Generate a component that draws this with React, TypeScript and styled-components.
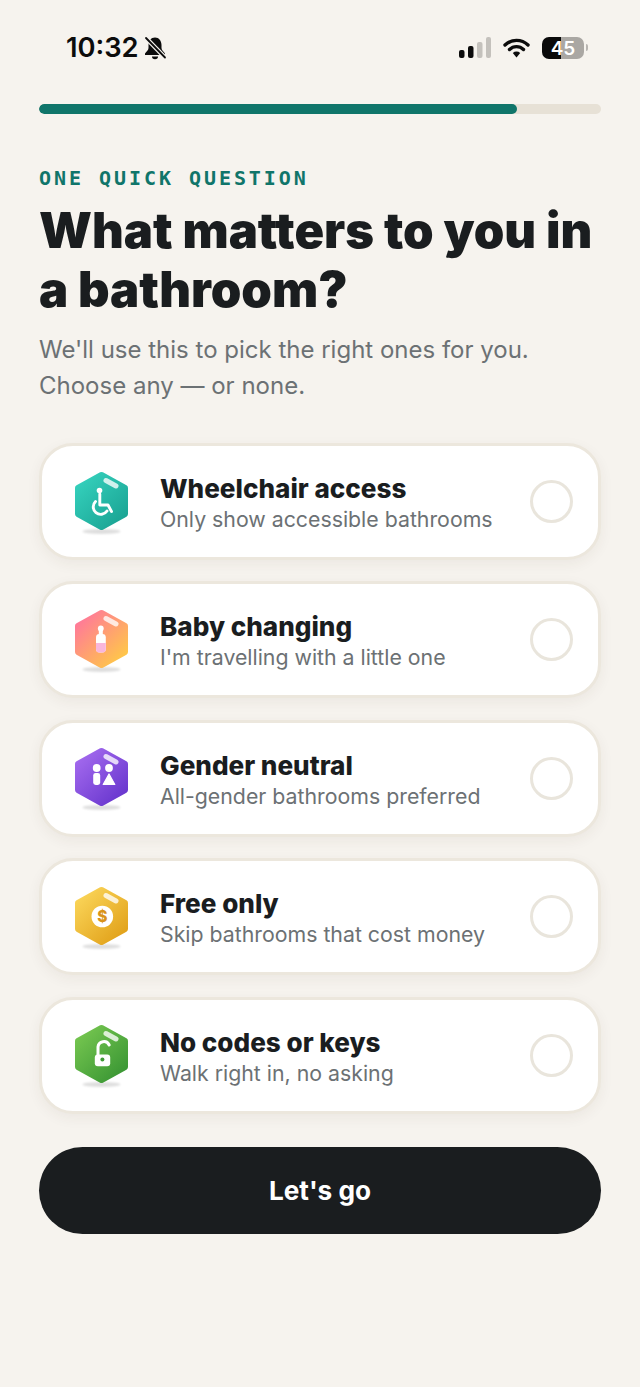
import React from "react";
import styled, { createGlobalStyle } from "styled-components";

const Global = createGlobalStyle`
  html, body { margin: 0; padding: 0; background: #f6f3ee; }
  * { box-sizing: border-box; }
`;

const Page = styled.main`
  width: 640px;
  height: 1387px;
  overflow: hidden;
  background: #f6f3ee;
  font-family: Inter, "Liberation Sans", sans-serif;
  color: #1a1d1f;
`;

const StatusBar = styled.header`
  display: flex;
  align-items: center;
  justify-content: space-between;
  height: 22px;
  margin-top: 37px;
  padding: 0 56px 0 66px;
`;

const StatusLeft = styled.div`
  display: flex;
  align-items: center;
  gap: 4px;
`;

const Time = styled.span`
  font-size: 27.3px;
  font-weight: 600;
  line-height: 22px;
  color: #0c0c0c;
`;

const StatusRight = styled.div`
  display: flex;
  align-items: center;
  gap: 12px;
`;

const Battery = styled.div`
  position: relative;
  display: flex;
  align-items: center;
  justify-content: center;
  width: 42px;
  height: 22px;
  border-radius: 7px;
  background: linear-gradient(to right, #0a0a0a 0 46%, #aaa7a3 46% 100%);
  color: #fff;
  font-size: 19px;
  font-weight: 600;
  &::after {
    content: "";
    position: absolute;
    right: -4px;
    top: 7px;
    width: 2px;
    height: 7px;
    border-radius: 0 2px 2px 0;
    background: #b8b5b1;
  }
`;

const Content = styled.div`
  padding: 0 39px;
`;

const Track = styled.div`
  height: 10px;
  width: 562px;
  margin-top: 45px;
  border-radius: 5px;
  background: #e7e1d6;
  overflow: hidden;
`;

const Fill = styled.div`
  height: 100%;
  border-radius: 5px;
  background: #10756a;
`;

const Eyebrow = styled.p`
  margin: 52px 0 0;
  font-family: "DejaVu Sans Mono", "Liberation Mono", monospace;
  font-size: 20px;
  font-weight: 700;
  line-height: 24px;
  letter-spacing: 2.95px;
  color: #10756a;
`;

const Title = styled.h1`
  margin: 11px 0 0;
  font-size: 49px;
  font-weight: 900;
  font-variation-settings: "opsz" 28;
  line-height: 59px;
  color: #1a1d1f;
`;

const Subtitle = styled.p`
  margin: 13px 0 0;
  font-size: 24px;
  font-weight: 400;
  font-variation-settings: "opsz" 15;
  line-height: 36px;
  color: #6c7174;
`;

const Options = styled.div`
  display: flex;
  flex-direction: column;
  gap: 21.4px;
  margin-top: 39px;
  width: 562px;
`;

const Card = styled.div`
  display: flex;
  align-items: center;
  height: 117px;
  padding: 0 25px 0 30px;
  border: 3px solid #ece7dd;
  border-radius: 34px;
  background: #fff;
  box-shadow: 0 4px 14px rgba(60, 50, 30, 0.06);
`;

const IconSlot = styled.svg`
  flex: none;
  width: 60px;
  height: 72px;
  margin-right: 28px;
`;

const CardText = styled.div`
  flex: 1;
  min-width: 0;
  padding-top: 4px;
`;

const CardTitle = styled.div`
  font-size: 26.1px;
  font-weight: 800;
  font-variation-settings: "opsz" 16;
  line-height: 32px;
  color: #1a1d1f;
`;

const CardSub = styled.div`
  font-size: 21.3px;
  font-weight: 400;
  font-variation-settings: "opsz" 14;
  line-height: 29px;
  color: #6c7174;
`;

const Radio = styled.div`
  flex: none;
  width: 43px;
  height: 43px;
  border-radius: 50%;
  border: 3px solid #e9e5dc;
  background: #fff;
`;

const Cta = styled.button`
  display: block;
  width: 562px;
  height: 87px;
  margin-top: 33.4px;
  border: 0;
  border-radius: 44px;
  background: #1a1d1f;
  color: #fff;
  font-family: inherit;
  font-size: 26.2px;
  font-weight: 700;
  font-variation-settings: "opsz" 16;
`;

const Hex: React.FC<{ id: string; from: string; to: string; children: React.ReactNode }> = ({ id, from, to, children }) => (
  <IconSlot viewBox="0 0 60 72" aria-hidden="true">
    <defs>
      <linearGradient id={id} x1="0.1" y1="0.1" x2="0.85" y2="0.95">
        <stop offset="0" stopColor={from} />
        <stop offset="1" stopColor={to} />
      </linearGradient>
      <filter id={id + "b"} x="-30%" y="-100%" width="160%" height="300%">
        <feGaussianBlur stdDeviation="1" />
      </filter>
    </defs>
    <ellipse cx="29.5" cy="65.5" rx="19" ry="2.4" fill="#000" opacity="0.13" filter={`url(#${id}b)`} />
    <path
      d="M29.5 9 L53 22 V48 L29.5 61 L6 48 V22 Z"
      fill={`url(#${id})`}
      stroke={`url(#${id})`}
      strokeWidth="6"
      strokeLinejoin="round"
    />
    <line x1="34" y1="14.5" x2="44" y2="20" stroke="#fff" strokeOpacity="0.78" strokeWidth="5" strokeLinecap="round" />
    {children}
  </IconSlot>
);

const options = [
  {
    id: "a", from: "#33ceba", to: "#1ba595",
    title: "Wheelchair access", sub: "Only show accessible bathrooms",
    glyph: (
      <g fill="none" stroke="#fff" strokeWidth="2.9" strokeLinecap="round" strokeLinejoin="round">
        <circle cx="27.5" cy="24.5" r="2.8" fill="#fff" stroke="none" />
        <path d="M27.8 28 V39 H36 L39.5 45.5" />
        <path d="M23.5 35.5 A7.5 7.5 0 1 0 35 45" />
      </g>
    ),
  },
  {
    id: "b", from: "#ff7b97", to: "#ffc64a",
    title: "Baby changing", sub: "I'm travelling with a little one",
    glyph: (
      <g>
        <circle cx="28.8" cy="24.5" r="2.9" fill="#fff" />
        <rect x="26.8" y="25" width="4" height="7" fill="#fff" />
        <rect x="24" y="30" width="9.8" height="18.5" rx="3.4" fill="#fff" />
        <path d="M24 39 H33.8 V45 A3.4 3.4 0 0 1 30.4 48.5 H27.4 A3.4 3.4 0 0 1 24 45 Z" fill="#f9b6dc" />
      </g>
    ),
  },
  {
    id: "c", from: "#a067ec", to: "#6a38cf",
    title: "Gender neutral", sub: "All-gender bathrooms preferred",
    glyph: (
      <g fill="#fff">
        <circle cx="24.7" cy="26" r="3.9" />
        <rect x="21.2" y="31" width="7" height="12" rx="2.4" />
        <circle cx="37" cy="26" r="3.9" />
        <path d="M37 32 L42.8 42.5 H31.2 Z" stroke="#fff" strokeWidth="1.2" strokeLinejoin="round" />
      </g>
    ),
  },
  {
    id: "d", from: "#f9d255", to: "#e2a31c",
    title: "Free only", sub: "Skip bathrooms that cost money",
    glyph: (
      <g>
        <circle cx="30.3" cy="35.5" r="10.8" fill="#fff" />
        <text x="30.3" y="41" textAnchor="middle" fontFamily="Inter, sans-serif" fontWeight="800" fontSize="15.5" fill="#d9931b">$</text>
      </g>
    ),
  },
  {
    id: "e", from: "#72c34e", to: "#3c9835",
    title: "No codes or keys", sub: "Walk right in, no asking",
    glyph: (
      <g>
        <path d="M26 37 V28 A5.9 5.9 0 0 1 37.2 26" fill="none" stroke="#fff" strokeWidth="3" strokeLinecap="round" />
        <rect x="22.8" y="35.5" width="15.4" height="11.8" rx="3" fill="#fff" />
        <circle cx="30.4" cy="40.5" r="2" fill="#3f9a36" />
      </g>
    ),
  },
];

export default function App() {
  return (
    <Page>
      <Global />
      <StatusBar>
        <StatusLeft>
          <Time>10:32</Time>
          <svg width="24" height="24" viewBox="0 0 24 24" aria-hidden="true">
            <path d="M12 1.5 C8 1.5 5.5 5 5.5 9 V12 C5.5 14 3.5 15.5 2 17.5 V19 H22 V17.5 C20.5 15.5 18.5 14 18.5 12 V9 C18.5 5 16 1.5 12 1.5 Z" fill="#0c0c0c" />
            <path d="M9 20.5 A3 2.8 0 0 0 15 20.5 Z" fill="#0c0c0c" />
            <path d="M2.5 1.5 L22 21.5" stroke="#f6f3ee" strokeWidth="4.4" />
            <path d="M3 2 L22 21.5" stroke="#0c0c0c" strokeWidth="1.8" strokeLinecap="round" />
          </svg>
        </StatusLeft>
        <StatusRight>
          <svg width="32" height="22" viewBox="0 0 32 22" aria-hidden="true">
            <rect x="0" y="13" width="5.5" height="8" rx="2" fill="#0c0c0c" />
            <rect x="9" y="9" width="5.5" height="12" rx="2" fill="#0c0c0c" />
            <rect x="18" y="5" width="5.5" height="16" rx="2" fill="#c4c1bc" />
            <rect x="27" y="0" width="5" height="21" rx="2" fill="#c4c1bc" />
          </svg>
          <svg width="27" height="22" viewBox="0 0 27 22" aria-hidden="true">
            <path d="M2 8 A16.5 16.5 0 0 1 25 8" fill="none" stroke="#0c0c0c" strokeWidth="3.4" strokeLinecap="round" />
            <path d="M6.5 12.5 A10 10 0 0 1 20.5 12.5" fill="none" stroke="#0c0c0c" strokeWidth="3.4" strokeLinecap="round" />
            <path d="M9.8 16 A5.4 5.4 0 0 1 17.2 16 L13.5 20.5 Z" fill="#0c0c0c" />
          </svg>
          <Battery>45</Battery>
        </StatusRight>
      </StatusBar>
      <Content>
        <Track>
          <Fill style={{ width: "85%" }} />
        </Track>
        <Eyebrow>ONE QUICK QUESTION</Eyebrow>
        <Title>
          What matters to you in
          <br />
          a bathroom?
        </Title>
        <Subtitle>
          We'll use this to pick the right ones for you.
          <br />
          Choose any — or none.
        </Subtitle>
        <Options>
          {options.map((o) => (
            <Card key={o.id}>
              <Hex id={o.id} from={o.from} to={o.to}>{o.glyph}</Hex>
              <CardText>
                <CardTitle>{o.title}</CardTitle>
                <CardSub>{o.sub}</CardSub>
              </CardText>
              <Radio />
            </Card>
          ))}
        </Options>
        <Cta>Let's go</Cta>
      </Content>
    </Page>
  );
}
